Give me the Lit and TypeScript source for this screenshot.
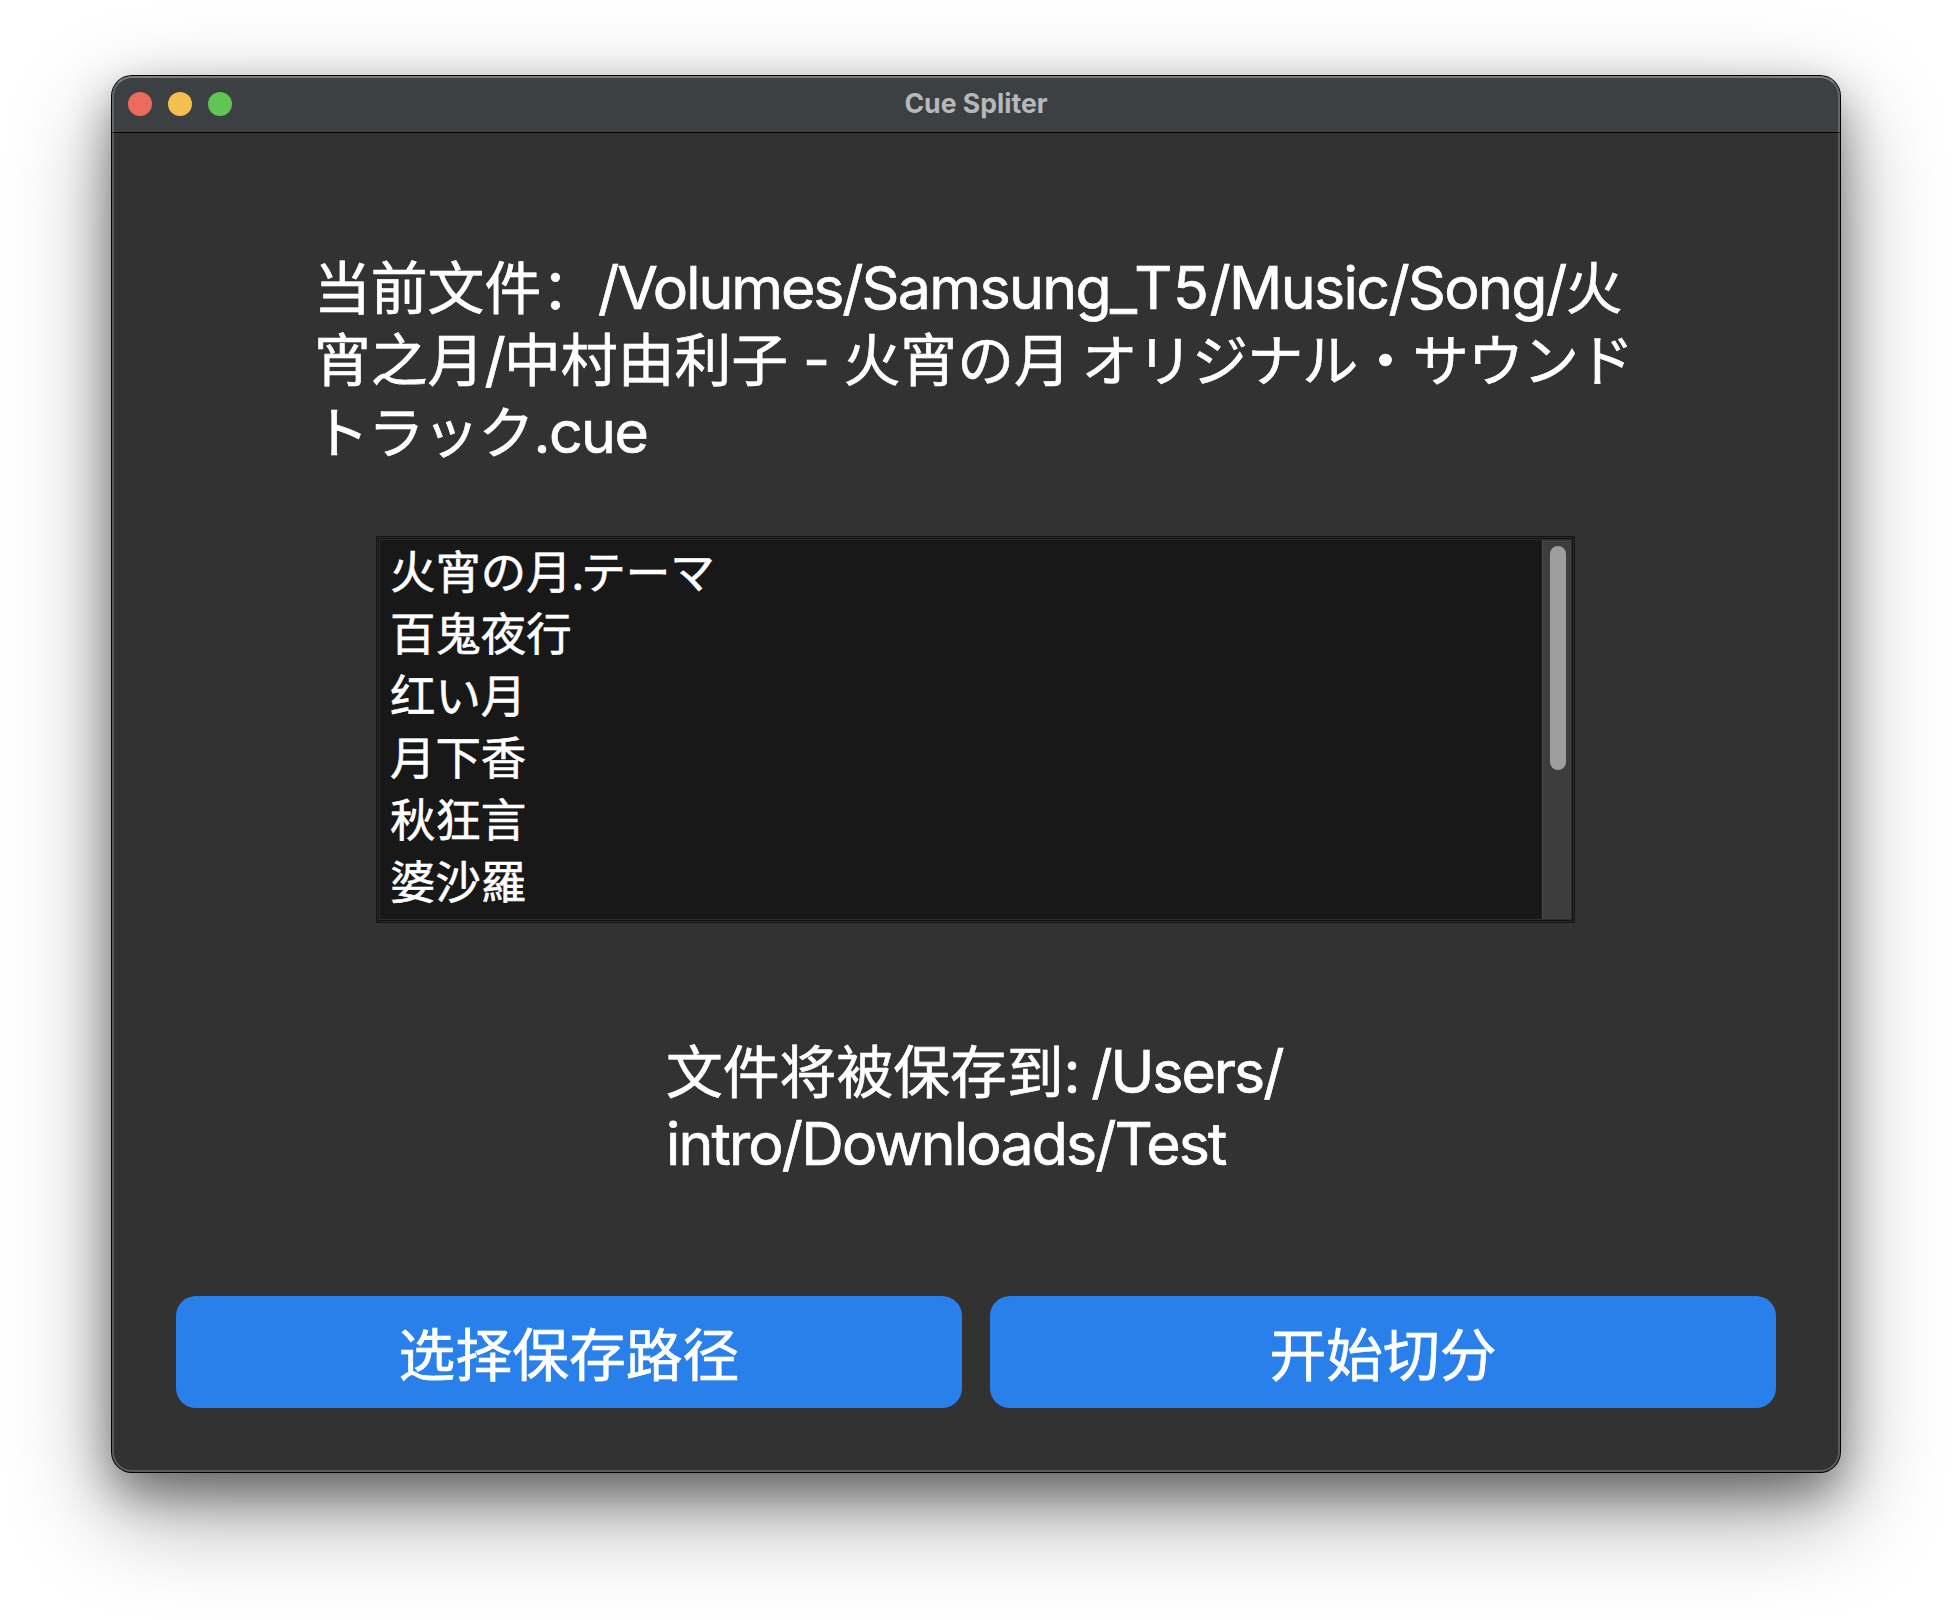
import { LitElement, html, css } from "lit";
import { customElement } from "lit/decorators.js";

const TRACKS = [
  ["火宵の月.", "テーマ"],
  ["百鬼夜行", ""],
  ["红い月", ""],
  ["月下香", ""],
  ["秋狂言", ""],
  ["婆沙羅", ""],
];

@customElement("app-root")
export class AppRoot extends LitElement {
  static styles = css`
    :host { display: flex; justify-content: center; box-sizing: border-box; width: 1952px; height: 1620px; padding-top: 76px; background: #fff; overflow: hidden;
      font-family: Inter, "Noto Sans CJK SC", sans-serif; color: #fff; }
    * { box-sizing: border-box; }
    .window { display: flex; flex-direction: column; width: 1728px; height: 1396px; border-radius: 20px; background: #323232; position: relative;
      box-shadow: 0 0 0 1px #000, 0 38px 100px rgba(0,0,0,.4), 0 20px 46px rgba(0,0,0,.4); }
    .window::after { content: ""; position: absolute; inset: 0; border-radius: 20px; border: 2px solid rgba(255,255,255,.2); border-top-color: rgba(255,255,255,.33); pointer-events: none; }
    .titlebar { display: grid; grid-template-columns: 1fr auto 1fr; align-items: center; height: 57px; padding: 0 16px; border-bottom: 1px solid #000; border-radius: 20px 20px 0 0; background: #3c4043; }
    .lights { display: flex; gap: 16px; }
    .light { width: 24px; height: 24px; border-radius: 50%; }
    .close { background: #ed6a5e; }
    .min { background: #f5bf4f; }
    .zoom { background: #61c554; }
    .title { font-size: 26.6px; font-weight: 700; color: #b5b9bb; line-height: 32px; padding-bottom: 3px; }
    .content { display: flex; flex-direction: column; align-items: center; flex: 1; padding: 119px 64px 64px; }
    .text { font-size: 59px; line-height: 72px; white-space: nowrap; letter-spacing: -1.6px; -webkit-text-stroke: .7px #fff; }
    .line { display: block; height: 72px; }
    .cjk { font-family: "Noto Sans CJK SC", sans-serif; font-size: 56.8px; line-height: 0; letter-spacing: 0; }
    .jp { font-family: "Noto Sans CJK JP", sans-serif; font-size: 56px; line-height: 0; letter-spacing: -.85px; margin-left: -4px; }
    .jp.first { margin-left: -1px; }
    .tight { letter-spacing: -2.05px; }
    .loose { letter-spacing: .6px; }
    .file { width: 1340px; padding-left: 8px; height: 216px; }
    .save { width: 620px; height: 144px; margin-top: 113px; letter-spacing: -1.85px; }
    .user { letter-spacing: -2px; word-spacing: -2px; }
    .list { display: flex; width: 1199px; height: 387px; margin: 68px 1px 0 0; padding: 4px; background: #181818;
      box-shadow: inset 0 0 0 1px #131313, inset 0 0 0 2px #2c2c2c, inset 0 0 0 3px #101010, inset 0 0 0 4px #2e2e2e; }
    .rows { flex: 1; margin: -2px 0 0; padding: 0 0 0 10px; list-style: none; }
    .row { height: 62px; line-height: 62px; font-size: 45.4px; font-family: "Noto Sans CJK SC", sans-serif; white-space: nowrap; -webkit-text-stroke: .6px #fff; }
    .kana { font-family: "Noto Sans CJK JP", sans-serif; font-size: 44.5px; line-height: 0; margin-left: -3px; }
    .track { width: 29px; background: #3d3d3d; border-left: 1px solid #4b4b4b; padding: 6px 0 0 7px; }
    .thumb { width: 16px; height: 224px; border-radius: 8px; background: #9e9e9e; }
    .buttons { display: flex; gap: 28px; width: 1600px; margin-top: auto; }
    .btn { flex: 1; height: 112px; border: 0; border-radius: 20px; background: #2980eb; color: #fff; font: 56.8px/110px "Noto Sans CJK SC", sans-serif; padding: 0 0 2px; -webkit-text-stroke: .7px #fff; }
  `;
  render() {
    return html`<div class="window">
      <div class="titlebar"><div class="lights"><i class="light close"></i><i class="light min"></i><i class="light zoom"></i></div><div class="title">Cue Spliter</div></div>
      <div class="content">
        <div class="text file">
          <span class="line"><span class="cjk">当前文件：</span><span class="tight">/Volumes/</span>Samsung<span class="loose">_T5</span>/Music/Song/<span class="cjk">火</span></span>
          <span class="line"><span class="cjk">宵之月</span>/<span class="cjk">中村由利子</span> - <span class="cjk">火宵の月</span> <span class="jp">オリジナル・サウンド</span></span>
          <span class="line"><span class="jp first">トラック</span>.cue</span>
        </div>
        <div class="list">
          <ul class="rows">${TRACKS.map(([name, kana]) => html`<li class="row">${name}${kana ? html`<span class="kana">${kana}</span>` : ""}</li>`)}</ul>
          <div class="track"><div class="thumb"></div></div>
        </div>
        <div class="text save">
          <span class="line user"><span class="cjk">文件将被保存到</span>: /Users/</span>
          <span class="line">intro/Downloads/Test</span>
        </div>
        <div class="buttons"><button class="btn">选择保存路径</button><button class="btn">开始切分</button></div>
      </div>
    </div>`;
  }
}
